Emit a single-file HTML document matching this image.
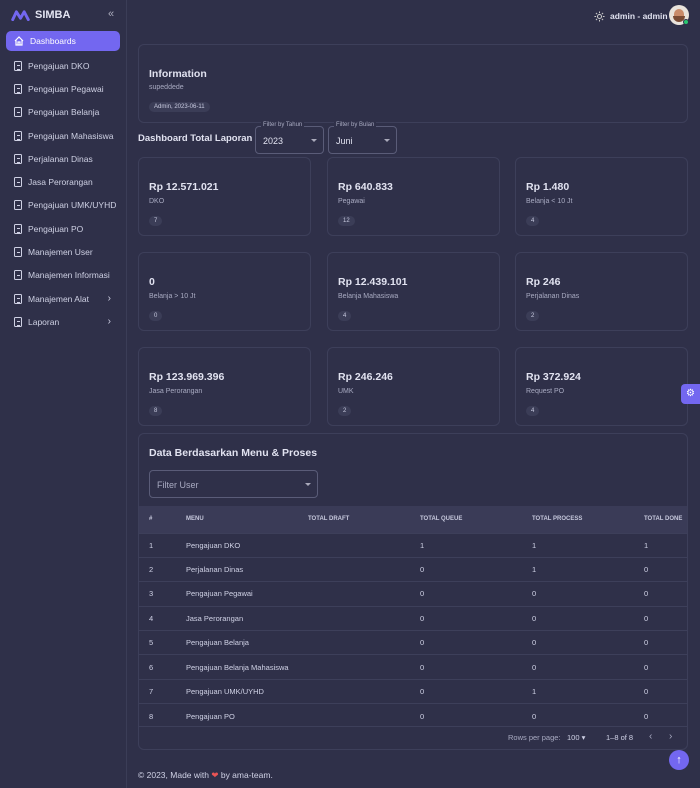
<!DOCTYPE html>
<html><head><meta charset="utf-8"><style>
*{box-sizing:border-box;margin:0;padding:0}
body{width:700px;height:788px;overflow:hidden;background:#2f3049;font-family:"Liberation Sans",sans-serif;color:#d0d2e6;position:relative}
.side{position:absolute;left:0;top:0;width:127px;height:788px;border-right:1px solid #3b3d57}
.logo{position:absolute;left:11px;top:9px;display:flex;align-items:center;gap:5px;font-weight:bold;font-size:11px;color:#e4e5f2}
.coll{position:absolute;left:108px;top:8px;font-size:11px;color:#aab}
.nav{position:absolute;top:31px;left:6px;width:114px}
.it{height:23.3px;display:flex;align-items:center;font-size:8.5px;color:#cfd1e4;padding-left:8px;gap:6px;border-radius:5px;position:relative;white-space:nowrap}
.it.act{background:#7367f0;color:#fff;height:20px;margin-bottom:3px}
.it .ar{position:absolute;right:9px;font-size:10px}
.doc{width:8px;height:10px;border:1.2px solid #cfd1e4;border-radius:1.5px;position:relative;flex:none}
.doc:after{content:"";position:absolute;left:1.5px;top:3.5px;width:3px;height:3px;border-top:1px solid #cfd1e4;border-bottom:1px solid #cfd1e4}
.card{position:absolute;border:1px solid #3d3f5a;border-radius:6px;background:#2f3049}
.h{font-size:10.5px;font-weight:bold;color:#e1e2f0}
.s{font-size:7px;color:#a9abc2}
.chip{display:inline-block;background:#3b3d57;border-radius:8px;font-size:6px;padding:2px 5px;color:#c9cbe0}
.stat .h{position:absolute;left:10px;top:23px}
.stat .s{position:absolute;left:10px;top:40px}
.stat .chip{position:absolute;left:10px;top:58px}
.sel{position:absolute;border:1px solid #5a5c78;border-radius:4px;height:28px;font-size:9px;color:#e1e2f0;padding:9px 7px}
.sel .lb{position:absolute;top:-5px;left:5px;background:#2f3049;font-size:6px;color:#a9abc2;padding:0 2px}
.sel .car{position:absolute;right:6px;top:12px;border:3px solid transparent;border-top:3px solid #aab}
table{border-collapse:collapse;width:100%;font-size:7.5px}
th{background:#3a3b57;height:27px;text-align:left;font-size:6px;color:#c6c8dc;font-weight:bold;padding-left:10px}
td{height:24.4px;border-top:1px solid #3d3f5a;padding-left:10px;color:#d0d2e6}
</style></head><body>
<div class="side">
<div class="logo"><svg width="19" height="11" viewBox="0 0 20 12"><path d="M1.5 10.5 L5.5 2 L10 9 L14 2 L18.5 10.5" stroke="#7367f0" stroke-width="3.2" fill="none" stroke-linejoin="round" stroke-linecap="round"/></svg>SIMBA</div>
<div class="coll">«</div>
<div class="nav">
<div class="it act"><svg width="10" height="10" viewBox="0 0 10 10"><path d="M1 5 L5 1 L9 5 M2 4 V9 H8 V4 M4 9 V6 H6 V9" stroke="#fff" fill="none" stroke-width="1.2"/></svg>Dashboards</div>
<div class="it"><span class="doc"></span>Pengajuan DKO</div>
<div class="it"><span class="doc"></span>Pengajuan Pegawai</div>
<div class="it"><span class="doc"></span>Pengajuan Belanja</div>
<div class="it"><span class="doc"></span>Pengajuan Mahasiswa</div>
<div class="it"><span class="doc"></span>Perjalanan Dinas</div>
<div class="it"><span class="doc"></span>Jasa Perorangan</div>
<div class="it"><span class="doc"></span>Pengajuan UMK/UYHD</div>
<div class="it"><span class="doc"></span>Pengajuan PO</div>
<div class="it"><span class="doc"></span>Manajemen User</div>
<div class="it"><span class="doc"></span>Manajemen Informasi</div>
<div class="it"><span class="doc"></span>Manajemen Alat<span class="ar">›</span></div>
<div class="it"><span class="doc"></span>Laporan<span class="ar">›</span></div>
</div></div>

<svg style="position:absolute;left:594px;top:11px" width="11" height="11" viewBox="0 0 12 12"><circle cx="6" cy="6" r="2.2" fill="none" stroke="#ccc" stroke-width="1.1"/><path d="M6 0.5V2.3M6 9.7V11.5M0.5 6H2.3M9.7 6H11.5M2.1 2.1L3.4 3.4M8.6 8.6L9.9 9.9M2.1 9.9L3.4 8.6M8.6 3.4L9.9 2.1" stroke="#ccc" stroke-width="1.1"/></svg>
<div style="position:absolute;left:610px;top:11px;font-size:8.5px;font-weight:bold;color:#e1e2f0">admin - admin</div>
<div style="position:absolute;left:669px;top:5px;width:20px;height:20px;border-radius:50%;background:#e9e3dc;overflow:hidden"><div style="position:absolute;left:5px;top:4px;width:10px;height:12px;border-radius:5px;background:#c98b6a"></div><div style="position:absolute;left:4px;top:11px;width:12px;height:6px;background:#7a4b34;border-radius:0 0 6px 6px"></div></div>
<div style="position:absolute;left:683px;top:19px;width:6px;height:6px;border-radius:50%;background:#28c76f;border:1px solid #2f3049"></div>

<div class="card" style="left:138px;top:44px;width:550px;height:79px">
<div class="h" style="position:absolute;left:10px;top:23px">Information</div>
<div class="s" style="position:absolute;left:10px;top:39px">supeddede</div>
<div class="chip" style="position:absolute;left:10px;top:57px">Admin, 2023-06-11</div>
</div>

<div class="h" style="position:absolute;left:138px;top:133px;font-size:9.5px">Dashboard Total Laporan</div>
<div class="sel" style="left:255px;top:126px;width:69px"><span class="lb">Filter by Tahun</span>2023<span class="car"></span></div>
<div class="sel" style="left:328px;top:126px;width:69px"><span class="lb">Filter by Bulan</span>Juni<span class="car"></span></div>

<div class="card stat" style="left:138px;top:157px;width:173px;height:79px"><div class="h">Rp 12.571.021</div><div class="s">DKO</div><span class="chip">7</span></div>
<div class="card stat" style="left:327px;top:157px;width:173px;height:79px"><div class="h">Rp 640.833</div><div class="s">Pegawai</div><span class="chip">12</span></div>
<div class="card stat" style="left:515px;top:157px;width:173px;height:79px"><div class="h">Rp 1.480</div><div class="s">Belanja &lt; 10 Jt</div><span class="chip">4</span></div>
<div class="card stat" style="left:138px;top:252px;width:173px;height:79px"><div class="h">0</div><div class="s">Belanja &gt; 10 Jt</div><span class="chip">0</span></div>
<div class="card stat" style="left:327px;top:252px;width:173px;height:79px"><div class="h">Rp 12.439.101</div><div class="s">Belanja Mahasiswa</div><span class="chip">4</span></div>
<div class="card stat" style="left:515px;top:252px;width:173px;height:79px"><div class="h">Rp 246</div><div class="s">Perjalanan Dinas</div><span class="chip">2</span></div>
<div class="card stat" style="left:138px;top:347px;width:173px;height:79px"><div class="h">Rp 123.969.396</div><div class="s">Jasa Perorangan</div><span class="chip">8</span></div>
<div class="card stat" style="left:327px;top:347px;width:173px;height:79px"><div class="h">Rp 246.246</div><div class="s">UMK</div><span class="chip">2</span></div>
<div class="card stat" style="left:515px;top:347px;width:173px;height:79px"><div class="h">Rp 372.924</div><div class="s">Request PO</div><span class="chip">4</span></div>

<div style="position:absolute;left:681px;top:384px;width:19px;height:20px;background:#7367f0;border-radius:4px 0 0 4px;color:#fff;font-size:10px;text-align:center;line-height:20px">⚙</div>

<div class="card" style="left:138px;top:433px;width:550px;height:317px;overflow:hidden">
<div class="h" style="position:absolute;left:10px;top:13px">Data Berdasarkan Menu &amp; Proses</div>
<div class="sel" style="left:10px;top:36px;width:169px;height:28px;color:#a9abc2">Filter User<span class="car"></span></div>
<div style="position:absolute;top:72px;left:0;width:550px">
<table>
<tr><th style="width:37px">#</th><th style="width:122px">MENU</th><th style="width:112px">TOTAL DRAFT</th><th style="width:112px">TOTAL QUEUE</th><th style="width:112px">TOTAL PROCESS</th><th>TOTAL DONE</th></tr>
<tr><td>1</td><td>Pengajuan DKO</td><td></td><td>1</td><td>1</td><td>1</td></tr>
<tr><td>2</td><td>Perjalanan Dinas</td><td></td><td>0</td><td>1</td><td>0</td></tr>
<tr><td>3</td><td>Pengajuan Pegawai</td><td></td><td>0</td><td>0</td><td>0</td></tr>
<tr><td>4</td><td>Jasa Perorangan</td><td></td><td>0</td><td>0</td><td>0</td></tr>
<tr><td>5</td><td>Pengajuan Belanja</td><td></td><td>0</td><td>0</td><td>0</td></tr>
<tr><td>6</td><td>Pengajuan Belanja Mahasiswa</td><td></td><td>0</td><td>0</td><td>0</td></tr>
<tr><td>7</td><td>Pengajuan UMK/UYHD</td><td></td><td>0</td><td>1</td><td>0</td></tr>
<tr><td>8</td><td>Pengajuan PO</td><td></td><td>0</td><td>0</td><td>0</td></tr>
</table></div>
<div style="position:absolute;top:292px;left:0;width:550px;border-top:1px solid #3d3f5a;font-size:7.5px;color:#a9abc2">
<span style="position:absolute;left:369px;top:6px">Rows per page:</span>
<span style="position:absolute;left:428px;top:6px;color:#d0d2e6">100 ▾</span>
<span style="position:absolute;left:467px;top:6px;color:#d0d2e6">1–8 of 8</span>
<span style="position:absolute;left:510px;top:4px;font-size:10px">‹</span>
<span style="position:absolute;left:530px;top:4px;font-size:10px">›</span>
</div>
</div>

<div style="position:absolute;left:138px;top:770px;font-size:8.5px;color:#d0d2e6">© 2023, Made with <span style="color:#ea5455">❤</span> by ama-team.</div>
<div style="position:absolute;left:669px;top:750px;width:20px;height:20px;border-radius:50%;background:#7367f0;color:#fff;font-size:11px;text-align:center;line-height:20px;font-weight:bold">↑</div>
</body></html>
